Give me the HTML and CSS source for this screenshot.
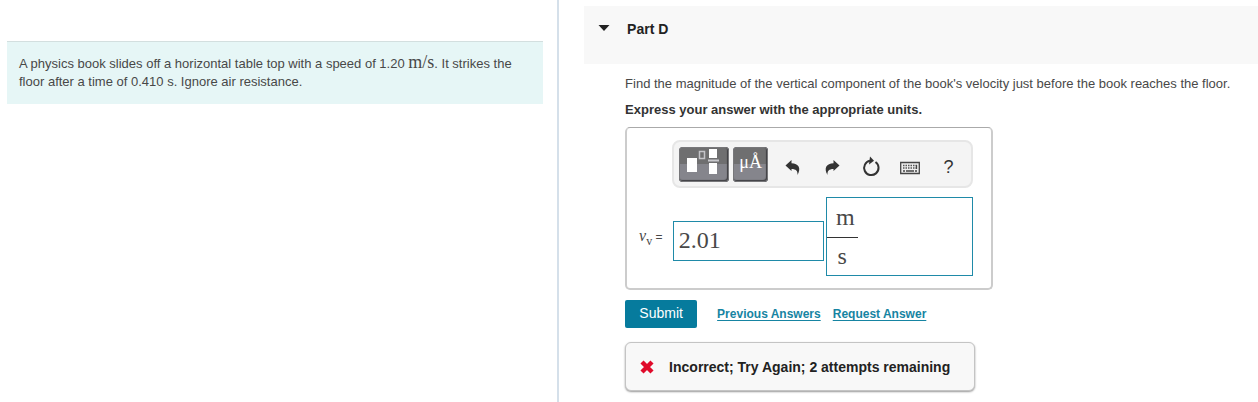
FILE: index.html
```html
<!DOCTYPE html>
<html lang="en">
<head>
    <meta charset="UTF-8">
    <meta name="viewport" content="width=device-width, initial-scale=1.0">
    <title>Part D</title>
    <link rel="stylesheet" href="styles.css">
</head>
<body>
    <aside class="problem">
        <p class="intro">A physics book slides off a horizontal table top with a speed of 1.20 <span class="unit">m/s</span>. It strikes the floor after a time of 0.410 s. Ignore air resistance.</p>
    </aside>

    <main class="part">
        <header class="part-header">
            <button type="button" class="toggle" aria-label="Collapse Part D">
                <svg width="12" height="8" viewBox="0 0 12 8"><path d="M.5 1h11L6 7z" fill="#222"/></svg>
            </button>
            <h1>Part D</h1>
        </header>

        <form class="question">
            <p>Find the magnitude of the vertical component of the book's velocity just before the book reaches the floor.</p>
            <p class="instructions">Express your answer with the appropriate units.</p>

            <div class="answer-box">
                <div class="toolbar">
                    <button type="button" class="tool dark templates" aria-label="Templates">
                        <svg width="50" height="35" viewBox="0 0 50 35">
                            <path d="M8 11h10v14H8zM30 2h8v9h-8zM30 16h8v11h-8z" fill="#fff"/>
                            <path d="M20.500 4.500h5v7h-5z" fill="none" stroke="#c4c4c8" stroke-width="1.500"/>
                            <path d="M29 12.500h11v2H29z" fill="#c8c8cc"/>
                        </svg>
                    </button>
                    <button type="button" class="tool dark symbols" aria-label="Symbols">μÅ</button>
                    <button type="button" class="tool" aria-label="Undo">
                        <svg width="18" height="18" viewBox="0 0 18 18"><path d="M1.500 7.500 7.500 2v3.300c7 0 10 5 6 11.700.4-4-1.500-6-6-6V13z" fill="#333"/></svg>
                    </button>
                    <button type="button" class="tool" aria-label="Redo">
                        <svg width="18" height="18" viewBox="0 0 18 18"><path d="M16.500 7.500 10.500 2v3.300c-7 0-10 5-6 11.700-.4-4 1.500-6 6-6V13z" fill="#333"/></svg>
                    </button>
                    <button type="button" class="tool" aria-label="Reset">
                        <svg width="20" height="22" viewBox="0 0 20 22"><path d="M14.500 6a7.200 7.200 0 1 1-5.500-1.200" fill="none" stroke="#333" stroke-width="2"/><path d="M9 .5 13 4.800 8 8.500z" fill="#333"/></svg>
                    </button>
                    <button type="button" class="tool" aria-label="Keyboard">
                        <svg width="20" height="22" viewBox="0 0 20 22">
                            <path d="M.7 6.500h18.600v11H.7z" fill="#eee" stroke="#444" stroke-width="1.300"/>
                            <path d="M3 9.500h14M3 12h14" stroke="#555" stroke-width="1.300" stroke-dasharray="1.500 1"/>
                            <path d="M3 15h2M6 15h8M15 15h2M16.500 9v4" stroke="#444" stroke-width="1.300"/>
                        </svg>
                    </button>
                    <button type="button" class="tool help" aria-label="Help">?</button>
                </div>
                <div class="fields">
                    <label for="value"><span class="variable">v<sub>v</sub></span> =</label>
                    <input type="text" id="value" class="value" value="2.01">
                    <div class="units">
                        <input type="text" class="numerator" value="m" aria-label="Units numerator">
                        <input type="text" class="denominator" value="s" aria-label="Units denominator">
                    </div>
                </div>
            </div>

            <div class="actions">
                <button type="submit" class="submit">Submit</button>
                <a href="#">Previous Answers</a>
                <a href="#">Request Answer</a>
            </div>

            <div class="feedback" role="status">
                <svg width="16" height="16" viewBox="0 0 16 16"><path d="M3 3l10 10M13 3 3 13" stroke="#e00b2b" stroke-width="4.400"/></svg>
                <span>Incorrect; Try Again; 2 attempts remaining</span>
            </div>
        </form>
    </main>
</body>
</html>
```
FILE: styles.css
```css
* {
    box-sizing: border-box;
}

body {
    margin: 0;
    min-height: 100vh;
    display: grid;
    grid-template-columns: minmax(0, 4fr) minmax(0, 5fr);
    background-color: #ffffff;
    color: #484848;
    font-family: "Liberation Sans", Arial, sans-serif;
    font-size: 13px;
    line-height: 18px;
}

p,
h1 {
    margin: 0;
}

button {
    font-family: inherit;
    cursor: pointer;
}

.problem {
    padding: 41px 14px 0 7px;
    border-right: 2px solid #d5e0ea;
}

.intro {
    padding: 13px 12px;
    background-color: #e6f6f6;
    border-top: 1px solid #d3dfdf;
}

.unit {
    font-family: "Liberation Serif", "Times New Roman", serif;
    font-size: 18px;
    line-height: 14px;
}

.part {
    padding: 6px 0 8px 25px;
}

.part-header {
    height: 58px;
    padding: 14px;
    display: flex;
    align-items: flex-start;
    gap: 17px;
    background-color: #f8f8f8;
}

.part-header h1 {
    font-size: 14px;
    line-height: 18px;
    color: #222222;
}

.toggle {
    height: 16px;
    padding: 0;
    display: flex;
    align-items: center;
    border: none;
    background: none;
}

.question {
    padding: 11px 0 0 41px;
}

.question p {
    white-space: nowrap;
}

.question .instructions {
    margin-top: 8px;
    font-weight: bold;
    color: #333333;
}

.answer-box {
    width: 368px;
    margin-top: 8px;
    padding: 12px 18px 12px 12px;
    border: 2px solid #cccccc;
    border-top: 1px solid #aaaaaa;
    border-radius: 5px;
}

.toolbar {
    height: 48px;
    margin-left: 33px;
    padding: 5px;
    display: flex;
    gap: 4px;
    background-color: #f4f4f4;
    border: 2px solid #e6e6e6;
    border-radius: 8px;
}

.tool {
    width: 35px;
    height: 35px;
    padding: 5px 0 0;
    display: flex;
    align-items: center;
    justify-content: center;
    border: none;
    background: none;
    color: #333333;
}

.dark {
    padding: 0;
    color: #ffffff;
    background: linear-gradient(#6f6f70 50%, #85858c 50%);
    border-radius: 4px;
    box-shadow: inset 0 0 0 1px #77777a, inset -1px -1px 1px 1px #3f3f42;
}

.templates {
    width: 50px;
}

.symbols {
    margin-right: 3px;
    padding-bottom: 4px;
    font-family: "Liberation Serif", serif;
    font-size: 18px;
}

.help {
    font-size: 18px;
}

.fields {
    margin-top: 9px;
    display: flex;
    align-items: center;
}

.fields label {
    width: 34px;
    font-size: 12px;
    white-space: nowrap;
}

.variable {
    font-family: "Liberation Serif", serif;
    font-size: 16px;
    font-style: italic;
}

.variable sub {
    font-size: 12px;
    font-style: normal;
    line-height: 0;
}

.value,
.units {
    border: 1px solid #1f8aa8;
    background-color: #ffffff;
}

.fields input {
    font-family: "Liberation Serif", "Times New Roman", serif;
    font-size: 24px;
    line-height: 27px;
    color: #484848;
}

.value {
    width: 151px;
    height: 40px;
    margin-top: 8px;
    padding: 0 5px;
}

.units {
    width: 149px;
    height: 79px;
    margin-left: 2px;
}

.units input {
    width: 31px;
    height: 40px;
    padding: 0;
    display: block;
    border: none;
    background: none;
    text-align: center;
}

.units .numerator {
    border-bottom: 1px solid #333333;
    padding-left: 6px;
}

.units .denominator {
    height: 37px;
}

.actions {
    margin-top: 10px;
    display: flex;
    align-items: center;
    gap: 12px;
}

.actions a {
    color: #1684a2;
    font-size: 12px;
    font-weight: bold;
    text-underline-offset: 2px;
}

.submit {
    width: 72px;
    height: 28px;
    margin-right: 8px;
    padding: 0 0 2px;
    border: none;
    border-radius: 2px;
    background-color: #067b9d;
    color: #ffffff;
    font-size: 14px;
}

.feedback {
    width: 350px;
    height: 49px;
    margin-top: 14px;
    padding: 0 13px;
    display: flex;
    align-items: center;
    gap: 14px;
    background-color: #f8f8f8;
    border: 1px solid #c4c4c4;
    border-radius: 6px;
    box-shadow: 0 1px 2px #999999;
    color: #222222;
    font-size: 14px;
    font-weight: bold;
    white-space: nowrap;
}
```
